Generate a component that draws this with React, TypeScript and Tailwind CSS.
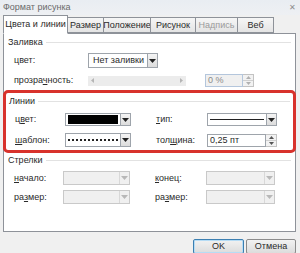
import React from 'react';

const font = { fontFamily: '"Liberation Sans", Arial, sans-serif' };

const Tab: React.FC<{ label: string; w: string; active?: boolean; disabled?: boolean }> = ({ label, w, active, disabled }) => (
  <div
    className={`${w} flex items-center justify-center border border-[#8e9299] text-[9px] -ml-px first:ml-0 ${
      active
        ? 'h-[19px] bg-white border-b-white relative z-10 -mb-px'
        : 'h-[16px] bg-gradient-to-b from-[#f6f6f6] to-[#e4e4e4]'
    } ${disabled ? 'text-[#9a9a9a]' : 'text-[#2a2a2a]'}`}
  >
    {label}
  </div>
);

const Arrow: React.FC<{ disabled?: boolean }> = ({ disabled }) => (
  <svg width="7" height="4" viewBox="0 0 7 4">
    <path d="M0 0h7L3.5 4z" fill={disabled ? '#b8b8b8' : '#222'} />
  </svg>
);

const Select: React.FC<{ w: string; children?: React.ReactNode; disabled?: boolean; h?: string }> = ({ w, children, disabled, h = 'h-[14px]' }) => (
  <div
    className={`${w} ${h} shrink-0 flex border ${
      disabled ? 'border-[#c9c9c9] bg-[#f0f0f0]' : 'border-[#9ea4ab] bg-white'
    }`}
  >
    <div className="flex-1 flex items-center min-w-0 px-[2px]">{children}</div>
    <div
      className={`w-[10px] flex items-center justify-center border-l ${
        disabled ? 'border-[#d8d8d8] bg-[#f0f0f0]' : 'border-[#9ea4ab] bg-gradient-to-b from-[#f4f4f4] to-[#dcdcdc]'
      }`}
    >
      <Arrow disabled={disabled} />
    </div>
  </div>
);

const Spin: React.FC<{ w: string; value: string; disabled?: boolean }> = ({ w, value, disabled }) => (
  <div className={`${w} h-[13px] shrink-0 flex`}>
    <div
      className={`flex-1 flex items-center px-[2px] border text-[9px] ${
        disabled ? 'border-[#b4c6dc] bg-[#f0f0f0] text-[#8a8a8a]' : 'border-[#9ea4ab] bg-white text-[#2a2a2a]'
      }`}
    >
      {value}
    </div>
    <div className="w-[11px] flex flex-col border border-l-0 border-[#c3c3c3] bg-[#f2f2f2]">
      <div className="flex-1 flex items-center justify-center border-b border-[#d0d0d0]">
        <svg width="5" height="3" viewBox="0 0 5 3"><path d="M0 3h5L2.5 0z" fill={disabled ? '#b0b0b0' : '#555'} /></svg>
      </div>
      <div className="flex-1 flex items-center justify-center">
        <svg width="5" height="3" viewBox="0 0 5 3"><path d="M0 0h5L2.5 3z" fill={disabled ? '#b0b0b0' : '#555'} /></svg>
      </div>
    </div>
  </div>
);

const Header: React.FC<{ label: string }> = ({ label }) => (
  <div className="flex items-center gap-[3px] h-[11px] text-[9px] text-[#2a2a2a]">
    <span>{label}</span>
    <div className="flex-1 h-px bg-[#e2e2e2]" />
  </div>
);

const U: React.FC<{ children: React.ReactNode }> = ({ children }) => <span className="underline underline-offset-1">{children}</span>;

const Label: React.FC<{ w: string; children: React.ReactNode }> = ({ w, children }) => (
  <div className={`${w} shrink-0 text-[9px] text-[#2a2a2a]`}>{children}</div>
);

export default function App() {
  return (
    <div style={font} className="w-[300px] h-[253px] overflow-hidden bg-[#f0f0f0] flex flex-col whitespace-nowrap leading-none">
      {/* title bar */}
      <div className="h-[15px] shrink-0 flex items-center justify-between pl-[3px] pr-[3px] bg-gradient-to-b from-[#e9edf2] to-[#eef0f3]">
        <span className="text-[9px] text-[#6a6a6a]">Формат рисунка</span>
        <span className="w-[10px] h-[10px] flex items-center justify-center text-[8px] text-[#8d8d8d]">✕</span>
      </div>

      {/* tabs */}
      <div className="h-[18px] shrink-0 flex items-end pl-[3px]">
        <Tab label="Цвета и линии" w="w-[65px]" active />
        <Tab label="Размер" w="w-[37px]" />
        <Tab label="Положение" w="w-[48px]" />
        <Tab label="Рисунок" w="w-[46px]" />
        <Tab label="Надпись" w="w-[43px]" disabled />
        <Tab label="Веб" w="w-[37px]" />
      </div>

      {/* panel */}
      <div className="ml-[3px] mr-[4px] h-[199px] shrink-0 bg-white border border-[#8e9299] pt-[3px] px-[4px] flex flex-col">
        <Header label="Заливка" />
        <div className="flex items-center h-[15px] mt-[5px] pl-[6px]">
          <Label w="w-[74px]">цвет:</Label>
          <Select w="w-[70px]" h="h-[15px]">
            <span className="text-[9px] text-[#2a2a2a] pl-[2px]">Нет заливки</span>
          </Select>
        </div>
        <div className="flex items-center h-[13px] mt-[6px] pl-[6px]">
          <Label w="w-[74px]">прозра<U>ч</U>ность:</Label>
          <div className="w-[98px] h-[10px] shrink-0 bg-[#ececec] flex items-center justify-between px-[3px]">
            <svg width="3" height="5" viewBox="0 0 3 5"><path d="M3 0v5L0 2.5z" fill="#b5b5b5" /></svg>
            <svg width="3" height="5" viewBox="0 0 3 5"><path d="M0 0v5L3 2.5z" fill="#b5b5b5" /></svg>
          </div>
          <div className="ml-[19px]">
            <Spin w="w-[49px]" value="0 %" disabled />
          </div>
        </div>

        {/* Линии (highlighted) */}
        <div className="-mx-[5px] mt-[3px] h-[63px] shrink-0 border-[3px] border-[#d8322c] rounded-[5px] pt-[3px] pl-[3px] pr-[3px] flex flex-col">
          <Header label="Линии" />
          <div className="flex items-center h-[13px] mt-[6px] pl-[6px]">
            <Label w="w-[50px]">ц<U>в</U>ет:</Label>
            <Select w="w-[66px]" h="h-[13px]">
              <div className="w-full h-[9px] bg-black" />
            </Select>
            <Label w="w-[51px] ml-[25px]"><U>т</U>ип:</Label>
            <Select w="w-[70px]" h="h-[13px]">
              <div className="w-full h-px bg-[#222]" />
            </Select>
          </div>
          <div className="flex items-center h-[14px] mt-[7px] pl-[6px]">
            <Label w="w-[50px]"><U>ш</U>аблон:</Label>
            <Select w="w-[66px]" h="h-[14px]">
              <div className="w-full h-0 border-t-2 border-dotted border-[#222]" />
            </Select>
            <Label w="w-[51px] ml-[25px]">тол<U>щ</U>ина:</Label>
            <Spin w="w-[70px]" value="0,25 пт" />
          </div>
        </div>

        <div className="mt-[2px]">
          <Header label="Стрелки" />
        </div>
        <div className="flex items-center h-[14px] mt-[5px] pl-[6px]">
          <Label w="w-[49px]"><U>н</U>ачало:</Label>
          <Select w="w-[67px]" disabled />
          <Label w="w-[51px] ml-[25px]"><U>к</U>онец:</Label>
          <Select w="w-[69px]" disabled />
        </div>
        <div className="flex items-center h-[14px] mt-[5px] pl-[6px]">
          <Label w="w-[49px]">ра<U>з</U>мер:</Label>
          <Select w="w-[67px]" disabled />
          <Label w="w-[51px] ml-[25px]">ра<U>з</U>мер:</Label>
          <Select w="w-[69px]" disabled />
        </div>
      </div>

      {/* buttons */}
      <div className="flex justify-end gap-[2px] pr-[4px] mt-[7px]">
        <button className="w-[51px] h-[15px] shrink-0 border border-[#3c7fb1] rounded-[2px] bg-gradient-to-b from-[#f2f2f2] to-[#dcdcdc] text-[9px] text-[#2a2a2a] flex items-center justify-center shadow-[inset_0_0_0_1px_#b6dcf5]">
          OK
        </button>
        <button className="w-[50px] h-[15px] shrink-0 border border-[#8b8b8b] rounded-[2px] bg-gradient-to-b from-[#f2f2f2] to-[#dcdcdc] text-[9px] text-[#2a2a2a] flex items-center justify-center">
          Отмена
        </button>
      </div>
    </div>
  );
}
